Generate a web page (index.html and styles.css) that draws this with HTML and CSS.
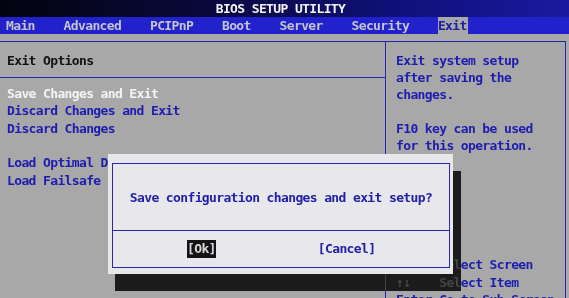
FILE: index.html
```html
<!DOCTYPE html>
<html>
<head>
<meta charset="utf-8">
<link rel="stylesheet" href="styles.css">
</head>
<body>
<div class="screen">
  <header class="titlebar">BIOS SETUP UTILITY</header>
  <nav class="menubar">
    <span class="menu-item">Main</span>
    <span class="menu-item">Advanced</span>
    <span class="menu-item">PCIPnP</span>
    <span class="menu-item">Boot</span>
    <span class="menu-item">Server</span>
    <span class="menu-item">Security</span>
    <span class="menu-item active">Exit</span>
  </nav>
  <div class="frame">
    <section class="left-pane">
      <div class="pane-title">Exit Options</div>
      <ul class="options">
        <li class="opt selected">Save Changes and Exit</li>
        <li class="opt">Discard Changes and Exit</li>
        <li class="opt">Discard Changes</li>
        <li class="opt blank"></li>
        <li class="opt">Load Optimal Defaults</li>
        <li class="opt">Load Failsafe Defaults</li>
      </ul>
    </section>
    <aside class="help-pane">
      <div class="help-desc">
        <div>Exit system setup</div>
        <div>after saving the</div>
        <div>changes.</div>
        <div>&nbsp;</div>
        <div>F10 key can be used</div>
        <div>for this operation.</div>
      </div>
      <div class="keys">
        <div class="key-line">←→    Select Screen</div>
        <div class="key-line">↑↓    Select Item</div>
        <div class="key-line">Enter Go to Sub Screen</div>
      </div>
    </aside>
  </div>
  <div class="modal-shadow"></div>
  <div class="dialog">
    <div class="dialog-box">
      <div class="dialog-msg">Save configuration changes and exit setup?</div>
      <div class="dialog-buttons">
        <span class="btn btn-active">[Ok]</span>
        <span class="btn">[Cancel]</span>
      </div>
    </div>
  </div>
</div>
</body>
</html>
```

FILE: styles.css
```css
* { box-sizing: border-box; }
html, body { margin: 0; padding: 0; }
body {
  background: #a8a8a8;
  font-family: "DejaVu Sans Mono", "Liberation Mono", monospace;
  font-size: 13px;
  font-weight: bold;
  letter-spacing: -0.63px;
}
.screen {
  position: relative;
  width: 569px;
  height: 298px;
  overflow: hidden;
  background: #a8a8a8;
}
.titlebar {
  height: 17px;
  line-height: 17px;
  text-align: center;
  padding-right: 8px;
  color: #f2f2f2;
  background: linear-gradient(to right, #040410 0%, #08083a 35%, #10107a 70%, #1a1aa0 100%);
}
.menubar {
  height: 17px;
  display: flex;
  gap: 28.8px;
  padding-left: 6px;
  background: #2222cc;
  color: #c4c4cc;
  line-height: 17px;
}
.menu-item { white-space: pre; }
.menu-item.active {
  background: #a8a8a8;
  color: #1c1ca8;
  padding-right: 1px;
}
.frame {
  margin-top: 7px;
  width: 566px;
  height: 260px;
  display: flex;
  border-top: 1px solid #2424b0;
  border-right: 1px solid #2424b0;
}
.left-pane {
  width: 385px;
  flex: none;
}
.pane-title {
  height: 36px;
  padding: 10px 0 0 7px;
  line-height: 17px;
  color: #121212;
  border-bottom: 1px solid #2424b0;
}
.options {
  list-style: none;
  margin: 0;
  padding: 7px 0 0 7px;
  color: #1c1cb0;
}
.opt {
  height: 17.33px;
  line-height: 17.33px;
  white-space: pre;
}
.opt.selected { color: #f4f4f4; }
.help-pane {
  flex: 1;
  border-left: 1px solid #2424b0;
  padding: 10px 0 0 10px;
  color: #1c1cb0;
}
.help-desc {
  line-height: 17px;
}
.keys {
  margin-top: 102px;
  line-height: 17.5px;
}
.key-line { white-space: pre; }
.modal-shadow {
  position: absolute;
  left: 115px;
  top: 171px;
  width: 346px;
  height: 120px;
  backdrop-filter: grayscale(1) invert(1) brightness(0.32);
}
.dialog {
  position: absolute;
  left: 108px;
  top: 154px;
  width: 345px;
  height: 120px;
  padding: 9px 3px 6px 4px;
  background: #e8e8ec;
}
.dialog-box {
  height: 105px;
  border: 1px solid #2a2aa8;
  display: flex;
  flex-direction: column;
}
.dialog-msg {
  height: 67px;
  border-bottom: 1px solid #2a2aa8;
  display: flex;
  align-items: center;
  justify-content: center;
  color: #2020a8;
  white-space: pre;
}
.dialog-buttons {
  flex: 1;
  display: flex;
  align-items: center;
  padding-left: 74px;
  gap: 102px;
}
.btn {
  height: 18px;
  line-height: 18px;
  color: #2020a8;
  white-space: pre;
}
.btn-active {
  background: #141414;
  color: #d8d8d8;
}
```
